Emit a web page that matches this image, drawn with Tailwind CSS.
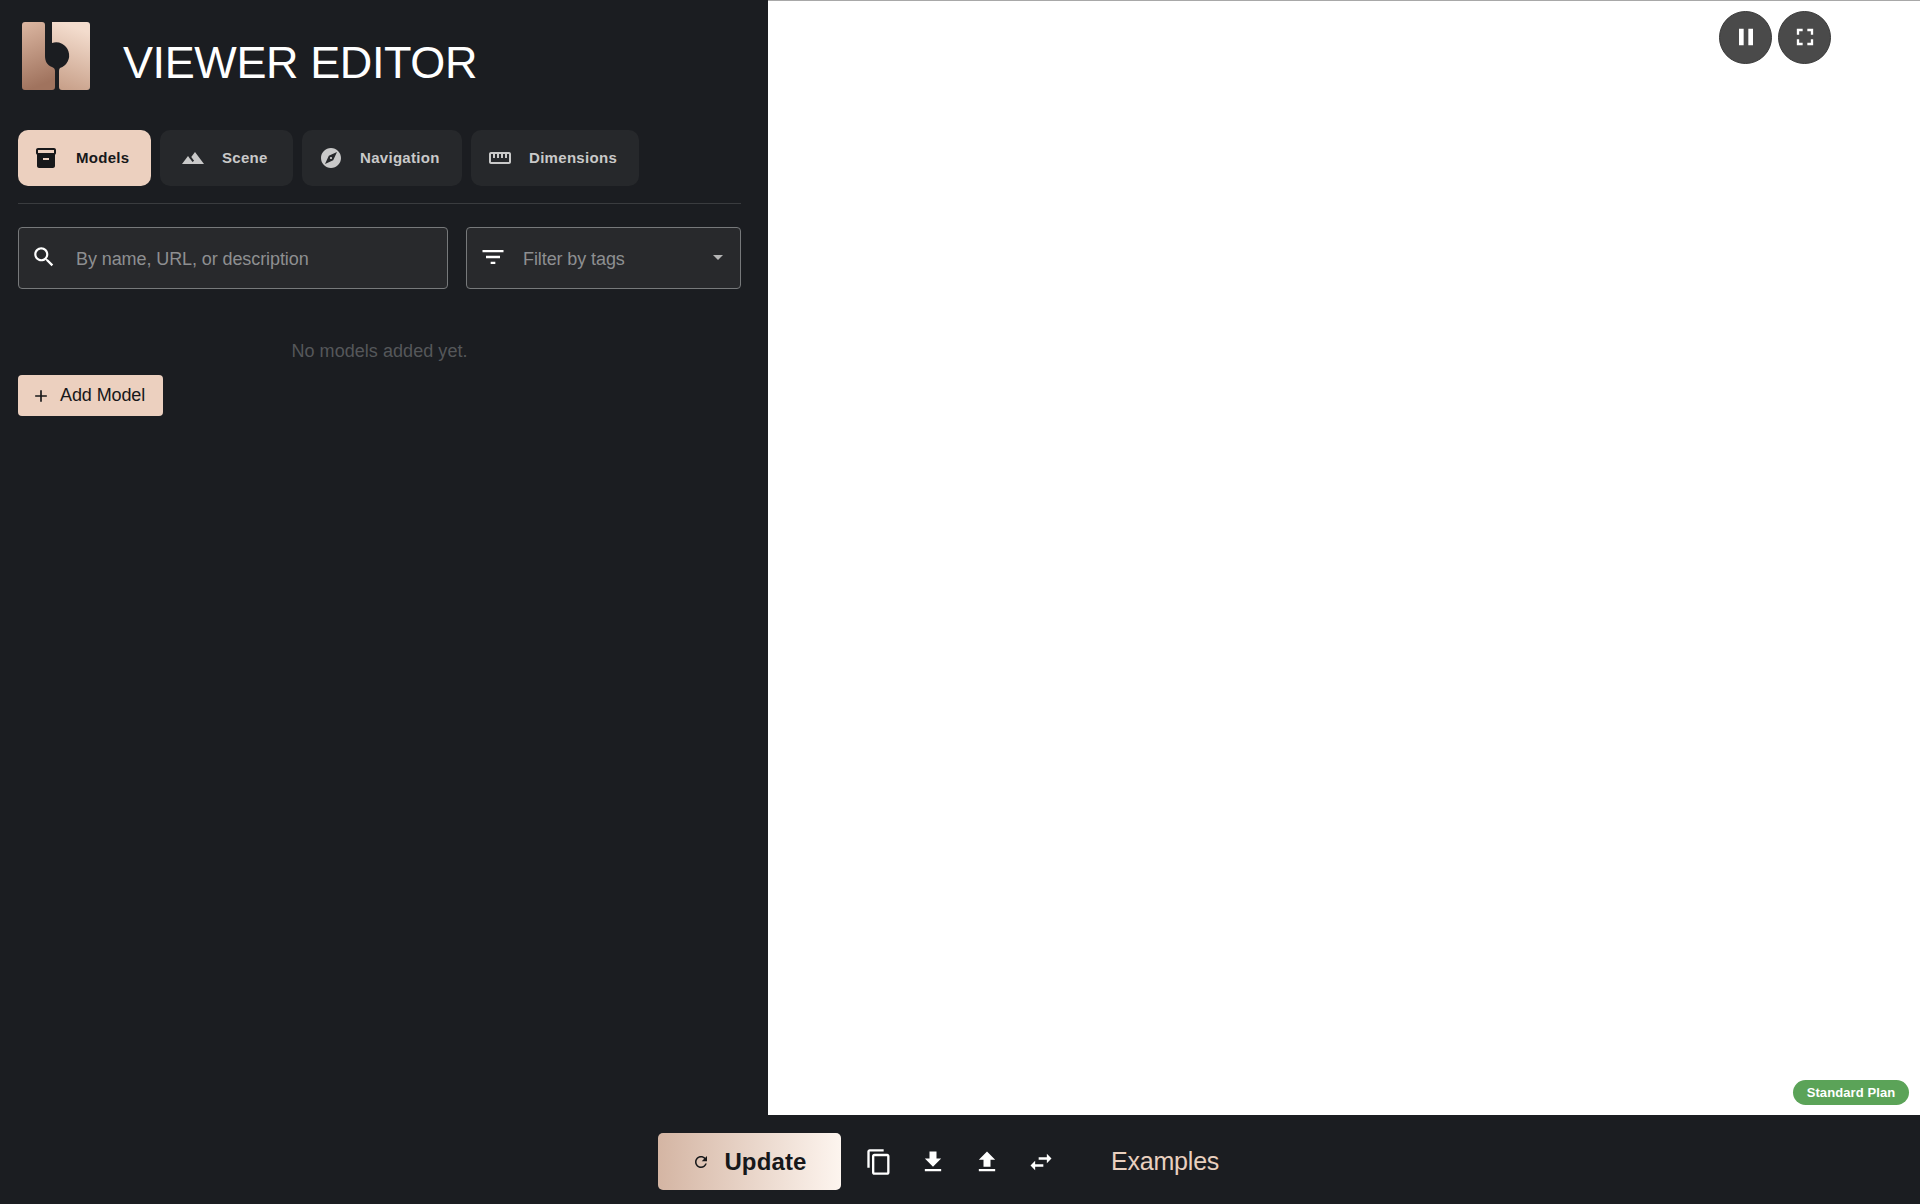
<!DOCTYPE html>
<html lang="en">
<head>
  <meta charset="UTF-8">
  <title>Viewer Editor</title>
  <script src="https://cdn.jsdelivr.net/npm/@tailwindcss/browser@4"></script>
</head>
<body class="h-[1204px] w-[1920px] overflow-hidden flex flex-col bg-[#1b1d21] font-['Liberation_Sans',sans-serif]">

  <div class="flex h-[1115px]">
    <!-- Sidebar -->
    <aside class="w-[768px] shrink-0 pt-[22px] pl-[18px] pr-[27px]">
      <div class="flex items-center pl-[4px] gap-[33px] h-[68px]">
        <svg class="w-[68px] h-[68px] shrink-0" viewBox="0 0 68 68">
          <defs>
            <linearGradient id="logoLeft" x1="0" y1="0" x2="0.2" y2="1">
              <stop offset="0" stop-color="#dcb7a2"/>
              <stop offset="1" stop-color="#a0735e"/>
            </linearGradient>
            <linearGradient id="logoRight" x1="0.2" y1="0" x2="0" y2="1">
              <stop offset="0" stop-color="#f3dccd"/>
              <stop offset="1" stop-color="#c59c85"/>
            </linearGradient>
          </defs>
          <path fill="url(#logoLeft)" d="M3 0H20q3 0 3 3V34C23 39 25 43 30 45q3 1 3 4V65q0 3-3 3H3q-3 0-3-3V3q0-3 3-3z"/>
          <path fill="url(#logoRight)" d="M30 0H65q3 0 3 3V65q0 3-3 3H40q-3 0-3-3V49q0-2 1-3A12.500 12.500 0 0 0 30 21z"/>
        </svg>
        <h1 class="text-[45px] leading-none text-white tracking-[-0.4px] mt-[12px]">VIEWER EDITOR</h1>
      </div>

      <nav class="flex gap-[9px] mt-[40px]">
        <button class="w-[133px] h-[56px] flex items-center gap-[18px] pl-[16px] rounded-[10px] bg-[#ecd0bf] text-[#17181a] text-[15px] font-bold tracking-[0.3px]">
          <svg class="w-6 h-6 shrink-0" viewBox="0 0 24 24" fill="currentColor"><path d="M20 2H4c-1 0-2 .9-2 2v3.010c0 .72.43 1.340 1 1.690V20c0 1.100 1.100 2 2 2h14c.9 0 2-.9 2-2V8.700c.57-.35 1-.97 1-1.690V4c0-1.100-1-2-2-2zm-5 12H9v-2h6v2zm5-7H4V4l16-.02V7z"/></svg>
          <span class="mt-[1px]">Models</span>
        </button>
        <button class="w-[133px] h-[56px] flex items-center gap-[17px] pl-[21px] rounded-[10px] bg-[#26282b] text-[#c9c9c9] text-[15px] font-bold tracking-[0.3px]">
          <svg class="w-6 h-6 shrink-0" viewBox="0 0 24 24" fill="currentColor"><path d="M14 6l-3.750 5 2.850 3.800-1.600 1.200C9.810 13.750 7 10 7 10l-6 8h22L14 6z"/></svg>
          <span class="mt-[1px]">Scene</span>
        </button>
        <button class="w-[160px] h-[56px] flex items-center gap-[17px] pl-[17px] rounded-[10px] bg-[#26282b] text-[#c9c9c9] text-[15px] font-bold tracking-[0.3px]">
          <svg class="w-6 h-6 shrink-0" viewBox="0 0 24 24" fill="currentColor"><path d="M12 10.900c-.61 0-1.100.49-1.100 1.100s.49 1.100 1.100 1.100c.61 0 1.100-.49 1.100-1.100s-.49-1.100-1.100-1.100zM12 2C6.480 2 2 6.480 2 12s4.480 10 10 10 10-4.480 10-10S17.520 2 12 2zm2.190 12.190L6 18l3.810-8.190L18 6l-3.810 8.190z"/></svg>
          <span class="mt-[1px]">Navigation</span>
        </button>
        <button class="w-[168px] h-[56px] flex items-center gap-[17px] pl-[17px] rounded-[10px] bg-[#26282b] text-[#c9c9c9] text-[15px] font-bold tracking-[0.3px]">
          <svg class="w-6 h-6 shrink-0" viewBox="0 0 24 24" fill="currentColor"><path d="M21 6H3c-1.100 0-2 .9-2 2v8c0 1.100.9 2 2 2h18c1.100 0 2-.9 2-2V8c0-1.100-.9-2-2-2zm0 10H3V8h2v4h2V8h2v4h2V8h2v4h2V8h2v4h2V8h2v8z"/></svg>
          <span class="mt-[1px]">Dimensions</span>
        </button>
      </nav>

      <div class="h-px bg-[#3a3c3f] mt-[17px]"></div>

      <div class="flex gap-[18px] mt-[23px]">
        <div class="w-[430px] h-[62px] flex items-center gap-[19px] pl-[12px] rounded-[4px] border border-[#77797b] bg-[#28292c] text-[18px] text-[#8e8f91] tracking-[-0.09px]">
          <svg class="w-[26px] h-[26px] shrink-0 text-white -mt-[2px]" viewBox="0 0 24 24" fill="currentColor"><path d="M15.500 14h-.79l-.28-.27C15.410 12.590 16 11.110 16 9.500 16 5.910 13.090 3 9.500 3S3 5.910 3 9.500 5.910 16 9.500 16c1.610 0 3.090-.59 4.230-1.570l.27.28v.79l5 4.990L20.490 19l-4.990-5zm-6 0C7.010 14 5 11.990 5 9.500S7.010 5 9.500 5 14 7.010 14 9.500 11.990 14 9.500 14z"/></svg>
          <span class="mt-[3px]">By name, URL, or description</span>
        </div>
        <div class="w-[275px] h-[62px] flex items-center gap-[16px] pl-[12px] pr-[10px] rounded-[4px] border border-[#77797b] bg-[#28292c] text-[18px] text-[#8e8f91] tracking-[-0.09px]">
          <svg class="w-[28px] h-[28px] shrink-0 text-white -mt-[2px]" viewBox="0 0 24 24" fill="currentColor"><path d="M10 18h4v-2h-4v2zM3 6v2h18V6H3zm3 7h12v-2H6v2z"/></svg>
          <span class="flex-1 mt-[3px]">Filter by tags</span>
          <svg class="w-6 h-6 shrink-0 text-[#b5b5b5] -mt-[2px]" viewBox="0 0 24 24" fill="currentColor"><path d="M7 10l5 5 5-5z"/></svg>
        </div>
      </div>

      <p class="mt-[50px] h-[25px] leading-[25px] text-center text-[18px] text-[#55575a] tracking-[0.05px]">No models added yet.</p>

      <button class="mt-[11px] w-[145px] h-[41px] flex items-center gap-[9px] pl-[13px] rounded-[4px] bg-[#ecd0bf] text-[#17181a] text-[18px] tracking-[-0.1px]">
        <svg class="w-[20px] h-[20px] shrink-0" viewBox="0 0 24 24" fill="currentColor"><path d="M19 13h-6v6h-2v-6H5v-2h6V5h2v6h6v2z"/></svg>
        Add Model
      </button>
    </aside>

    <!-- Viewer -->
    <main class="relative flex-1 bg-white border-t border-[#a8a8a8]">
      <div class="absolute top-[10px] left-[951px] flex gap-[6px]">
        <button class="w-[53px] h-[53px] rounded-full bg-[#4a4a4a] text-white flex items-center justify-center border border-[#3a3a3a]">
          <svg class="w-7 h-7 -mt-[2px]" viewBox="0 0 24 24" fill="currentColor"><path d="M6 19h4V5H6v14zm8-14v14h4V5h-4z"/></svg>
        </button>
        <button class="w-[53px] h-[53px] rounded-full bg-[#4a4a4a] text-white flex items-center justify-center border border-[#3a3a3a]">
          <svg class="w-7 h-7 -mt-[2px]" viewBox="0 0 24 24" fill="currentColor"><path d="M7 14H5v5h5v-2H7v-3zm-2-4h2V7h3V5H5v5zm12 7h-3v2h5v-5h-2v3zM14 5v2h3v3h2V5h-5z"/></svg>
        </button>
      </div>
      <span class="absolute right-[11px] bottom-[10px] w-[116px] h-[25px] flex items-center justify-center rounded-full bg-[#5ba358] text-white text-[13px] font-bold tracking-[0.1px]">Standard Plan</span>
    </main>
  </div>

  <!-- Bottom bar -->
  <footer class="h-[89px] flex items-center pl-[658px] pt-[4px]">
    <button class="w-[183px] h-[57px] flex items-center justify-center gap-[14px] rounded-[5px] bg-linear-to-r from-[#d4b5a3] to-[#fdf5ef] text-[#17181a] text-[24px] font-bold tracking-[0.15px]">
      <svg class="w-[18px] h-[18px] shrink-0" viewBox="0 0 24 24" fill="currentColor"><path d="M17.650 6.350C16.200 4.900 14.210 4 12 4c-4.420 0-7.990 3.580-7.990 8s3.570 8 7.990 8c3.730 0 6.840-2.550 7.730-6h-2.080c-.82 2.330-3.040 4-5.650 4-3.310 0-6-2.690-6-6s2.690-6 6-6c1.660 0 3.140.69 4.220 1.780L13 11h7V4l-2.350 2.350z"/></svg>
      Update
    </button>
    <div class="flex gap-[26px] ml-[24px] text-white">
      <svg class="w-[28px] h-[28px]" viewBox="0 0 24 24" fill="currentColor"><path d="M16 1H4c-1.100 0-2 .9-2 2v14h2V3h12V1zm3 4H8c-1.100 0-2 .9-2 2v14c0 1.100.9 2 2 2h11c1.100 0 2-.9 2-2V7c0-1.100-.9-2-2-2zm0 16H8V7h11v14z"/></svg>
      <svg class="w-[28px] h-[28px]" viewBox="0 0 24 24" fill="currentColor"><path d="M19 9h-4V3H9v6H5l7 7 7-7zM5 18v2h14v-2H5z"/></svg>
      <svg class="w-[28px] h-[28px]" viewBox="0 0 24 24" fill="currentColor"><path d="M9 16h6v-6h4l-7-7-7 7h4v6zm-4 2h14v2H5z"/></svg>
      <svg class="w-[28px] h-[28px]" viewBox="0 0 24 24" fill="currentColor"><path d="M6.990 11L3 15l3.990 4v-3H14v-2H6.990v-3zM21 9l-3.990-4v3H10v2h7.010v3L21 9z"/></svg>
    </div>
    <span class="ml-[56px] text-[25px] text-[#e9d0bf] tracking-[-0.2px]">Examples</span>
  </footer>
</body>
</html>
